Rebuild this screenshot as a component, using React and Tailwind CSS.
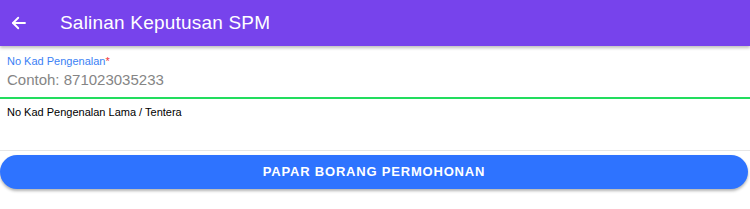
import React from 'react';

const App = () => {
  return (
    <div className="w-[750px] h-[209px] bg-white overflow-hidden" style={{ fontFamily: '"Liberation Sans", Arial, sans-serif' }}>
      {/* Header */}
      <div className="h-[46px] bg-[#7743ec] flex items-center shadow-[0_2px_3px_rgba(0,0,0,0.25)] relative z-10">
        <svg className="ml-[10px]" width="18" height="18" viewBox="0 0 24 24" fill="none" stroke="white" strokeWidth="2.4" strokeLinecap="round" strokeLinejoin="round">
          <path d="M20 12H4" />
          <path d="M11 5l-7 7 7 7" />
        </svg>
        <h1 className="ml-[32px] text-white text-[19px] font-normal tracking-[0.2px]">Salinan Keputusan SPM</h1>
      </div>

      {/* Field 1 */}
      <div className="px-[7px] pt-[9px] pb-[5px] border-b-2 border-[#22dd5e]">
        <label className="block text-[11px] leading-[13px] text-[#3b7ff5]">
          No Kad Pengenalan<span className="text-[#f0313b]">*</span>
        </label>
        <input
          className="mt-[3px] w-full text-[15px] leading-[18px] outline-none placeholder:text-[#858585]"
          placeholder="Contoh: 871023035233"
        />
      </div>

      {/* Field 2 */}
      <div className="h-[52px] px-[7px] pt-[7px] border-b border-[#e6e6e6]">
        <label className="block text-[11px] leading-[13px] text-black">No Kad Pengenalan Lama / Tentera</label>
        <input className="w-full text-[15px] outline-none" />
      </div>

      {/* Button */}
      <div className="pt-[4px] pr-[2px]">
        <button className="w-full h-[34px] rounded-full bg-[#2e73ff] text-white text-[13px] font-bold tracking-[0.8px] shadow-[0_2px_3px_rgba(0,0,0,0.3)]">
          PAPAR BORANG PERMOHONAN
        </button>
      </div>
    </div>
  );
};

export default App;
